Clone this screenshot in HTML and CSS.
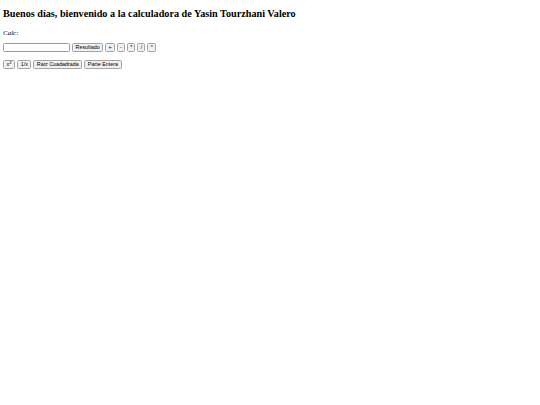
FILE: index.html
```
<!DOCTYPE html>
<html>
<head>
<meta charset="utf-8">
<link rel="stylesheet" href="styles.css">
</head>
<body>
<div class="page">
<h1 class="title">Buenos días, bienvenido a la calculadora de Yasin Tourzhani Valero</h1>
<p class="label"><em>Calc:</em></p>
<div class="row"><input type="text" class="display"><button class="btn">Resultado</button><button class="btn op">+</button><button class="btn op">-</button><button class="btn op">*</button><button class="btn op">/</button><button class="btn op">^</button></div>
<div class="row row2"><button class="btn">x<sup>2</sup></button><button class="btn">1/x</button><button class="btn">Raiz Cuadadrada</button><button class="btn">Parte Entera</button></div>
</div>
</body>
</html>
```
FILE: styles.css
```
body { margin: 0; background: #fff; font-family: "Liberation Serif", serif; color: #000; }
.page { display: flex; flex-direction: column; align-items: flex-start; padding: 8px 3px; }
.title { margin: 0; font-size: 10.2px; line-height: 12px; font-weight: bold; }
.label { margin: 9px 0 0; font-size: 7px; line-height: 8px; }
.row { display: flex; align-items: center; gap: 2px; margin-top: 6px; }
.row2 { margin-top: 8px; }
.display { box-sizing: border-box; width: 67px; height: 9px; margin: 0; padding: 0; border: 1px solid #9a9a9a; border-radius: 1.5px; background: #fff; }
.btn { box-sizing: border-box; height: 9px; margin: 0; padding: 0 2.5px; font-family: "Liberation Sans", sans-serif; font-size: 5.4px; line-height: 7px; color: #000; background: #f0f0f0; border: 1px solid #a3a3a3; border-radius: 1.5px; }
.op { padding: 0 2.2px; }
.btn sup { font-size: 4.4px; line-height: 0; vertical-align: 2px; }
```
